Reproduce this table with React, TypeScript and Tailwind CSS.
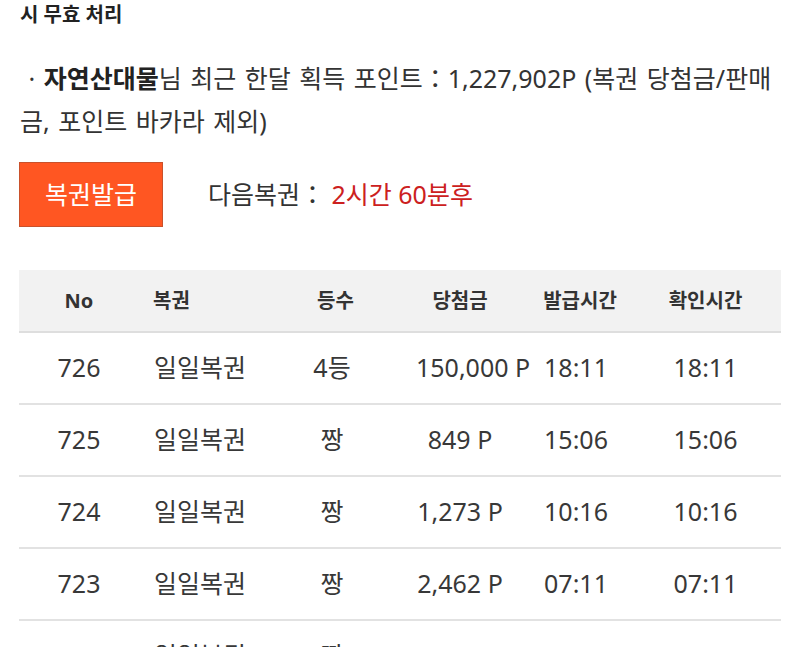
const rows = [
  { no: "726", name: "일일복권", rank: "4등", prize: "150,000 P", issued: "18:11", checked: "18:11" },
  { no: "725", name: "일일복권", rank: "짱", prize: "849 P", issued: "15:06", checked: "15:06" },
  { no: "724", name: "일일복권", rank: "짱", prize: "1,273 P", issued: "10:16", checked: "10:16" },
  { no: "723", name: "일일복권", rank: "짱", prize: "2,462 P", issued: "07:11", checked: "07:11" },
  { no: "722", name: "일일복권", rank: "짱", prize: "1,000 P", issued: "07:12", checked: "07:12" },
];

const cols = "grid grid-cols-[120px_131px_128px_124px_108px_151px]";

export default function App() {
  return (
    <div
      className="w-[800px] bg-white text-[#333]"
      style={{ fontFamily: '"Noto Sans", "Noto Sans CJK KR", sans-serif' }}
    >
      <div className="pl-[20px] pt-[1px] text-[20px] font-bold leading-[28px] text-[#222]">시 무효 처리</div>

      <p className="mt-[28px] px-[20px] text-[25px] leading-[43px] text-[#333] [word-spacing:2px]">
        {"\u00a0· "}
        <span className="font-bold text-[#222]">자연산대물</span>님 최근 한달 획득 포인트：1,227,902P (복권 당첨금/판매금, 포인트 바카라 제외)
      </p>

      <div className="mt-[19px] flex items-center px-[19px]">
        <button className="flex h-[65px] w-[144px] items-center justify-center border border-[#c9512b] bg-[#ff5622] text-[25px] text-white">
          복권발급
        </button>
        <div className="ml-[45px] text-[25px] text-[#333]">
          다음복권： <span className="text-[#cc2020]">2시간 60분후</span>
        </div>
      </div>

      <div className="mx-[19px] mt-[43px]">
        <div className={`${cols} h-[63px] items-center border-b-2 border-[#dedede] bg-[#f2f2f2] text-[20px] font-bold text-[#333]`}>
          <div className="text-center">No</div>
          <div className="pl-[14px]">복권</div>
          <div className="pl-[3px] text-center">등수</div>
          <div className="text-center">당첨금</div>
          <div className="pl-[8px] text-center">발급시간</div>
          <div className="text-center">확인시간</div>
        </div>
        {rows.map((r) => (
          <div
            key={r.no}
            className={`${cols} h-[72px] items-center border-b-2 border-[#e2e2e2] text-[25px] text-[#383838]`}
          >
            <div className="text-center">{r.no}</div>
            <div className="whitespace-nowrap pl-[15px]">{r.name}</div>
            <div className="pr-[4px] text-center">{r.rank}</div>
            <div className="whitespace-nowrap px-[18px] text-center">{r.prize}</div>
            <div className="text-center">{r.issued}</div>
            <div className="text-center">{r.checked}</div>
          </div>
        ))}
      </div>
    </div>
  );
}
